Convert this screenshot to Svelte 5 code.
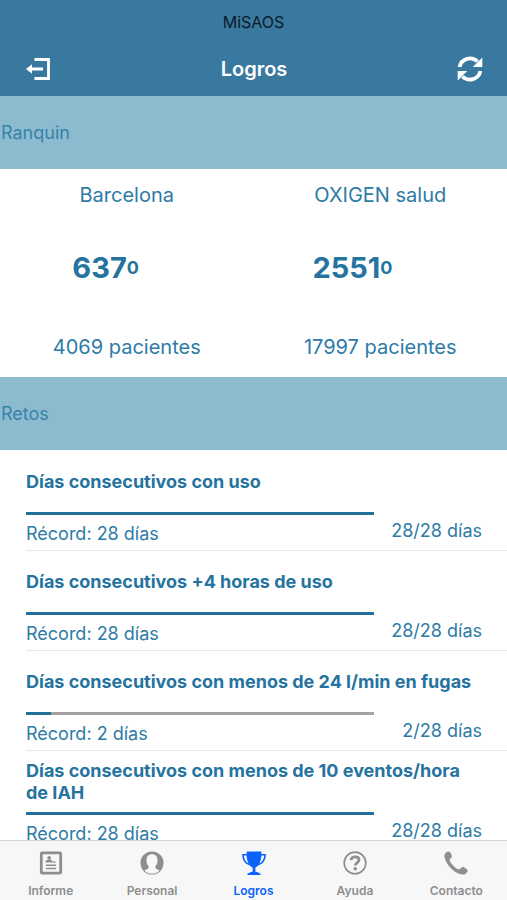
<script>
  const rankings = [
    { name: 'Barcelona', position: 637, patients: 4069 },
    { name: 'OXIGEN salud', position: 2551, patients: 17997 }
  ];

  const goals = [
    { title: 'Días consecutivos con uso', days: 28, record: 28 },
    { title: 'Días consecutivos +4 horas de uso', days: 28, record: 28 },
    { title: 'Días consecutivos con menos de 24 l/min en fugas', days: 2, record: 2 },
    { title: 'Días consecutivos con menos de 10 eventos/hora de IAH', days: 28, record: 28 }
  ];
  const total = 28;

  const tabs = ['Informe', 'Personal', 'Logros', 'Ayuda', 'Contacto'];
  let active = $state('Logros');
</script>

<div class="app">
  <header>
    <div class="brand">MiSAOS</div>
    <div class="nav">
      <button class="icon-button" aria-label="Salir">
        <svg width="26" height="24" viewBox="0 0 26 24">
          <path d="M9.500 2.500h14v19h-14" fill="none" stroke="currentColor" stroke-width="2.800" />
          <path d="M1 12l6-4.800v3.400H18v2.800H7v3.400z" fill="currentColor" />
        </svg>
      </button>
      <h1>Logros</h1>
      <button class="icon-button" aria-label="Actualizar">
        <svg width="26" height="26" viewBox="0 0 26 26">
          <path d="M2.600 11A10.600 10.600 0 0 1 20.500 5.500" fill="none" stroke="currentColor" stroke-width="3.800" />
          <path d="M25.300 1.500v9.500h-9.500z" fill="currentColor" />
          <path d="M23.400 15A10.600 10.600 0 0 1 5.500 20.500" fill="none" stroke="currentColor" stroke-width="3.800" />
          <path d="M.7 24.500V15h9.500z" fill="currentColor" />
        </svg>
      </button>
    </div>
  </header>

  <main>
    <h2>Ranquin</h2>
    <section class="rankings">
      {#each rankings as r}
        <div class="ranking">
          <div class="name">{r.name}</div>
          <div class="position"><strong>{r.position}</strong><span>0</span></div>
          <div class="patients">{r.patients} pacientes</div>
        </div>
      {/each}
    </section>

    <h2>Retos</h2>
    <ul class="goals">
      {#each goals as g}
        <li>
          <h3>{g.title}</h3>
          <div class="details">
            <div class="progress">
              <div class="track"><div class="fill" style:width="{(g.days / total) * 100}%"></div></div>
              <div class="record">Récord: {g.record} días</div>
            </div>
            <div class="count">{g.days}/{total} días</div>
          </div>
        </li>
      {/each}
    </ul>
  </main>

  <nav class="tabs">
    {#each tabs as tab}
      <button class:active={active === tab} onclick={() => (active = tab)}>
        <svg width="26" height="26" viewBox="0 0 26 26">
          {#if tab === 'Informe'}
            <rect x="2.500" y="2" width="21" height="22" rx="1" fill="none" stroke="currentColor" stroke-width="3" />
            <circle cx="11" cy="7.500" r="2" fill="currentColor" />
            <path d="M7 12.500c0-2.500 2-3 4-3s4 .5 4 3z" fill="currentColor" />
            <path d="M15 12h3M7.500 15.500h11M7.500 19h11" stroke="currentColor" stroke-width="1.500" />
          {:else if tab === 'Personal'}
            <circle cx="13" cy="13" r="12.500" fill="currentColor" />
            <path d="M13 3.500c-4 0-6 2.500-6 6.500 0 3 .8 4.500 2 6 .8 1.200.5 2.800-.8 3.400L4.800 21.200A11.500 11.500 0 0 0 21.200 21.200l-3.400-1.800c-1.300-.6-1.600-2.200-.8-3.400 1.200-1.500 2-3 2-6 0-4-2-6.500-6-6.500z" class="cutout" />
          {:else if tab === 'Logros'}
            <path d="M5 .5h16v3c0 6.500-2 12.500-6.500 14.300v4.700c2.200.2 3.500.8 4 1.700h1.500V26H6v-1.800h1.500c.5-.9 1.800-1.500 4-1.700v-4.700C7 16 5 10 5 3.500z" fill="currentColor" />
            <path d="M5.500 4H1c.2 5.200 2.500 9.500 8 11M20.500 4H25c-.2 5.200-2.500 9.500-8 11" fill="none" stroke="currentColor" stroke-width="1.700" />
          {:else if tab === 'Ayuda'}
            <circle cx="13" cy="13" r="11.700" fill="none" stroke="currentColor" stroke-width="1.800" />
            <path d="M8.700 10c.2-2.500 1.800-3.700 4.400-3.700 2.500 0 4.300 1.200 4.300 3.300 0 3-4.100 2.900-4.100 6.200" fill="none" stroke="currentColor" stroke-width="3" />
            <circle cx="13.200" cy="19.300" r="1.900" fill="currentColor" />
          {:else}
            <path d="M1.200 2.800C2.200 1.500 4 .5 5.300.6c1.400.2 3.300 3.800 3.300 5.300 0 1.700-2.700 2.300-2.500 4 .3 2.700 6.800 9.400 9.800 10 1.900.3 2.500-2.400 4.200-2.500 1.600 0 5.200 2.200 5.400 3.500.2 1.400-1.200 3.400-2.700 4.200-3.200 1.500-9.200-.9-13.600-4.800C4.400 16.100.7 9.500.5 5.700c0-1.100.1-2.100.7-2.900z" fill="currentColor" />
          {/if}
        </svg>
        <span>{tab}</span>
      </button>
    {/each}
  </nav>
</div>

<style>
  :global(body) {
    margin: 0;
  }

  .app {
    display: flex;
    flex-direction: column;
    height: 100vh;
    background: #fff;
    color: #2d7ba6;
    font-family: Inter, 'Liberation Sans', sans-serif;
    font-size: 18px;
    line-height: 22px;
  }

  h1,
  h2,
  h3,
  ul {
    margin: 0;
    padding: 0;
  }

  button {
    padding: 0;
    border: 0;
    background: none;
    color: inherit;
    font: inherit;
    cursor: pointer;
  }

  svg {
    display: block;
  }

  header {
    flex: none;
    background: #39789f;
    color: #fff;
  }

  .brand {
    height: 44px;
    color: #0b1c28;
    font-size: 16px;
    line-height: 44px;
    text-align: center;
  }

  .nav {
    display: flex;
    align-items: center;
    justify-content: space-between;
    height: 50px;
    padding: 0 24px 2px 25px;
  }

  h1 {
    font-size: 20px;
    font-weight: 600;
  }

  main {
    flex: 1;
    min-height: 0;
    overflow: hidden;
  }

  h2 {
    padding: 0 1px;
    background: #8cbbd0;
    color: #3783a9;
    font-size: 18px;
    font-weight: 400;
    line-height: 73px;
  }

  .rankings {
    display: grid;
    grid-template-columns: 1fr 1fr;
    font-size: 20px;
    text-align: center;
  }

  .name {
    line-height: 52px;
  }

  .position {
    display: grid;
    grid-template-columns: 1fr 1fr;
    align-items: center;
    height: 94px;
    color: #25739f;
    font-weight: 700;
    text-align: left;
  }

  .position strong {
    font-size: 29px;
    font-weight: 700;
    text-align: right;
  }

  .position span {
    font-size: 18px;
  }

  .patients {
    padding-top: 2px;
    line-height: 60px;
  }

  .goals {
    padding-top: 1px;
    list-style: none;
  }

  li {
    margin-left: 26px;
    padding-right: 25px;
    border-bottom: 1px solid #e4e6e8;
  }

  h3 {
    display: flex;
    align-items: center;
    height: 61px;
    color: #25739f;
    font-size: 18px;
    font-weight: 700;
  }

  .details {
    display: flex;
    height: 38px;
  }

  .progress {
    flex: 1;
  }

  .track {
    height: 3px;
    background: #a3a3a3;
  }

  .fill {
    height: 100%;
    background: #216f98;
  }

  .record {
    padding-top: 8px;
  }

  .count {
    width: 108px;
    padding-top: 8px;
    text-align: right;
  }

  .tabs {
    display: flex;
    flex: none;
    height: 59px;
    border-top: 1px solid #d2d4d6;
    background: #f7f7f7;
    color: #8e8e8e;
  }

  .tabs button {
    display: flex;
    flex: 1;
    flex-direction: column;
    align-items: center;
    gap: 7px;
    padding-top: 10px;
    font-size: 12px;
    font-weight: 600;
    line-height: 18px;
  }

  .tabs .active {
    color: #0b62fb;
  }

  .cutout {
    fill: #f7f7f7;
  }
</style>
